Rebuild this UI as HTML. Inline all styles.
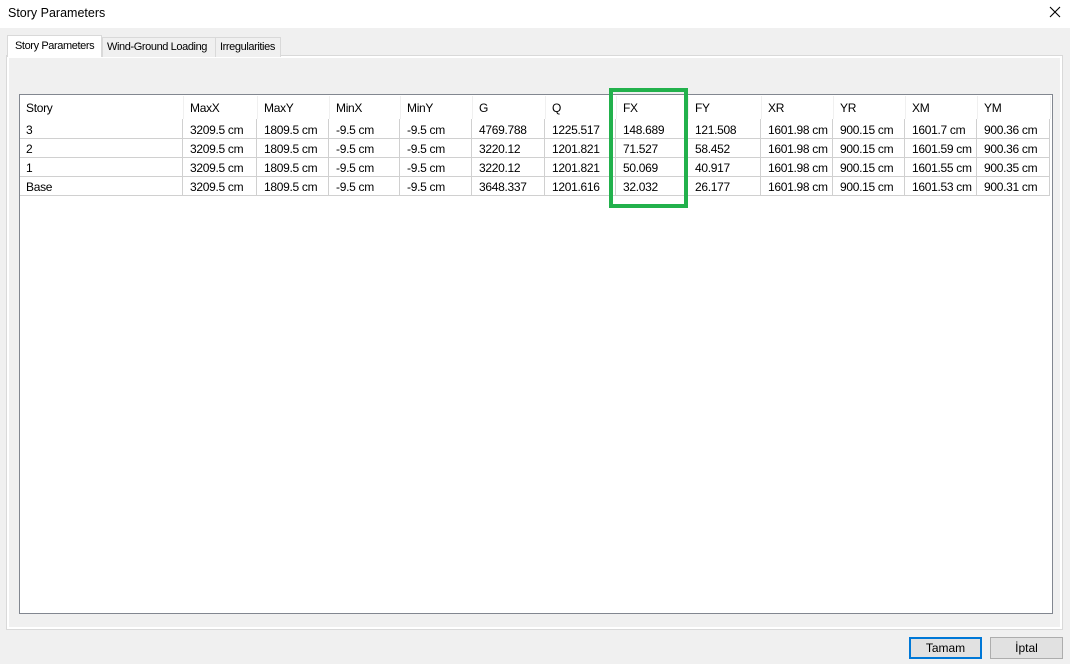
<!DOCTYPE html>
<html><head><meta charset="utf-8"><style>
*{margin:0;padding:0;box-sizing:border-box}
body{width:1070px;height:664px;background:#f0f0f0;font-family:"Liberation Sans",sans-serif;font-size:12px;color:#000;position:relative;overflow:hidden}
.title{position:absolute;left:0;top:0;width:1070px;height:28px;background:#fff}
.title span{position:absolute;left:8px;top:6px;font-size:12.5px}
.close{position:absolute;left:1048px;top:5px;width:14px;height:14px}
.tab{position:absolute;height:20px;border:1px solid #d9d9d9;border-bottom:none;background:#f0f0f0;font-size:11px;padding:3px 0 0 4px;letter-spacing:-0.4px;white-space:nowrap}
.panel{position:absolute;left:6px;top:55px;width:1057px;height:575px;border:1px solid #d9d9d9;background:#f0f0f0;box-shadow:inset 1px 1px 0 #fff,inset -1px -1px 0 #fff,inset 2px 2px 0 #fff,inset -2px -2px 0 #fff}
.grid{position:absolute;left:19px;top:94px;width:1034px;height:520px;border:1px solid #828790;background:#fff}
.c{position:absolute;white-space:nowrap;letter-spacing:-0.3px}
.hl{position:absolute;background:#e3e3e3;width:1px}
.vl{position:absolute;background:#d0d0d0;height:1px}
.green{position:absolute;left:609px;top:88px;width:79px;height:120px;border:4px solid #22b14c}
.btn{position:absolute;top:637px;height:22px;width:73px;background:#e1e1e1;border:1px solid #adadad;text-align:center;line-height:20px;font-size:12px}
</style></head><body>
<div class="title"><span>Story Parameters</span>
<svg class="close" viewBox="0 0 14 14"><path d="M2 2L12 12M12 2L2 12" stroke="#000" stroke-width="1.1"/></svg></div>
<div class="panel"></div>
<div class="tab" style="left:102px;top:37px;width:114px;padding-left:4px">Wind-Ground Loading</div>
<div class="tab" style="left:215px;top:37px;width:66px">Irregularities</div>
<div class="tab" style="left:7px;top:35px;width:95px;height:22px;background:#fff;padding-top:4px;padding-left:7px">Story Parameters</div>
<div class="grid"></div>
<div id="g"></div>
<div class="green"></div>
<div class="btn" style="left:909px;border:2px solid #0078d7;line-height:18px">Tamam</div>
<div class="btn" style="left:990px">İptal</div>
<script>
var cols=[20,183,257,329,400,472,545,616,688,761,833,905,977,1050];
var heads=["Story","MaxX","MaxY","MinX","MinY","G","Q","FX","FY","XR","YR","XM","YM"];
var rows=[["3","3209.5 cm","1809.5 cm","-9.5 cm","-9.5 cm","4769.788","1225.517","148.689","121.508","1601.98 cm","900.15 cm","1601.7 cm","900.36 cm"],
["2","3209.5 cm","1809.5 cm","-9.5 cm","-9.5 cm","3220.12","1201.821","71.527","58.452","1601.98 cm","900.15 cm","1601.59 cm","900.36 cm"],
["1","3209.5 cm","1809.5 cm","-9.5 cm","-9.5 cm","3220.12","1201.821","50.069","40.917","1601.98 cm","900.15 cm","1601.55 cm","900.35 cm"],
["Base","3209.5 cm","1809.5 cm","-9.5 cm","-9.5 cm","3648.337","1201.616","32.032","26.177","1601.98 cm","900.15 cm","1601.53 cm","900.31 cm"]];
var h="";
for(var i=0;i<13;i++){var x=cols[i]+(i==0?6:7);
h+='<div class="c" style="left:'+x+'px;top:101px">'+heads[i]+'</div>';
for(var r=0;r<4;r++)h+='<div class="c" style="left:'+x+'px;top:'+(123+r*19)+'px">'+rows[r][i]+'</div>';}
for(var i=1;i<14;i++){h+='<div class="hl" style="left:'+cols[i]+'px;top:96px;height:23px;background:#f0f0f0"></div>';
h+='<div class="hl" style="left:'+(cols[i]-1)+'px;top:119px;height:76px;background:#d0d0d0"></div>';}
for(var r=0;r<4;r++)h+='<div class="vl" style="left:20px;width:1030px;top:'+(138+r*19)+'px"></div>';
document.getElementById("g").innerHTML=h;
</script>
</body></html>
